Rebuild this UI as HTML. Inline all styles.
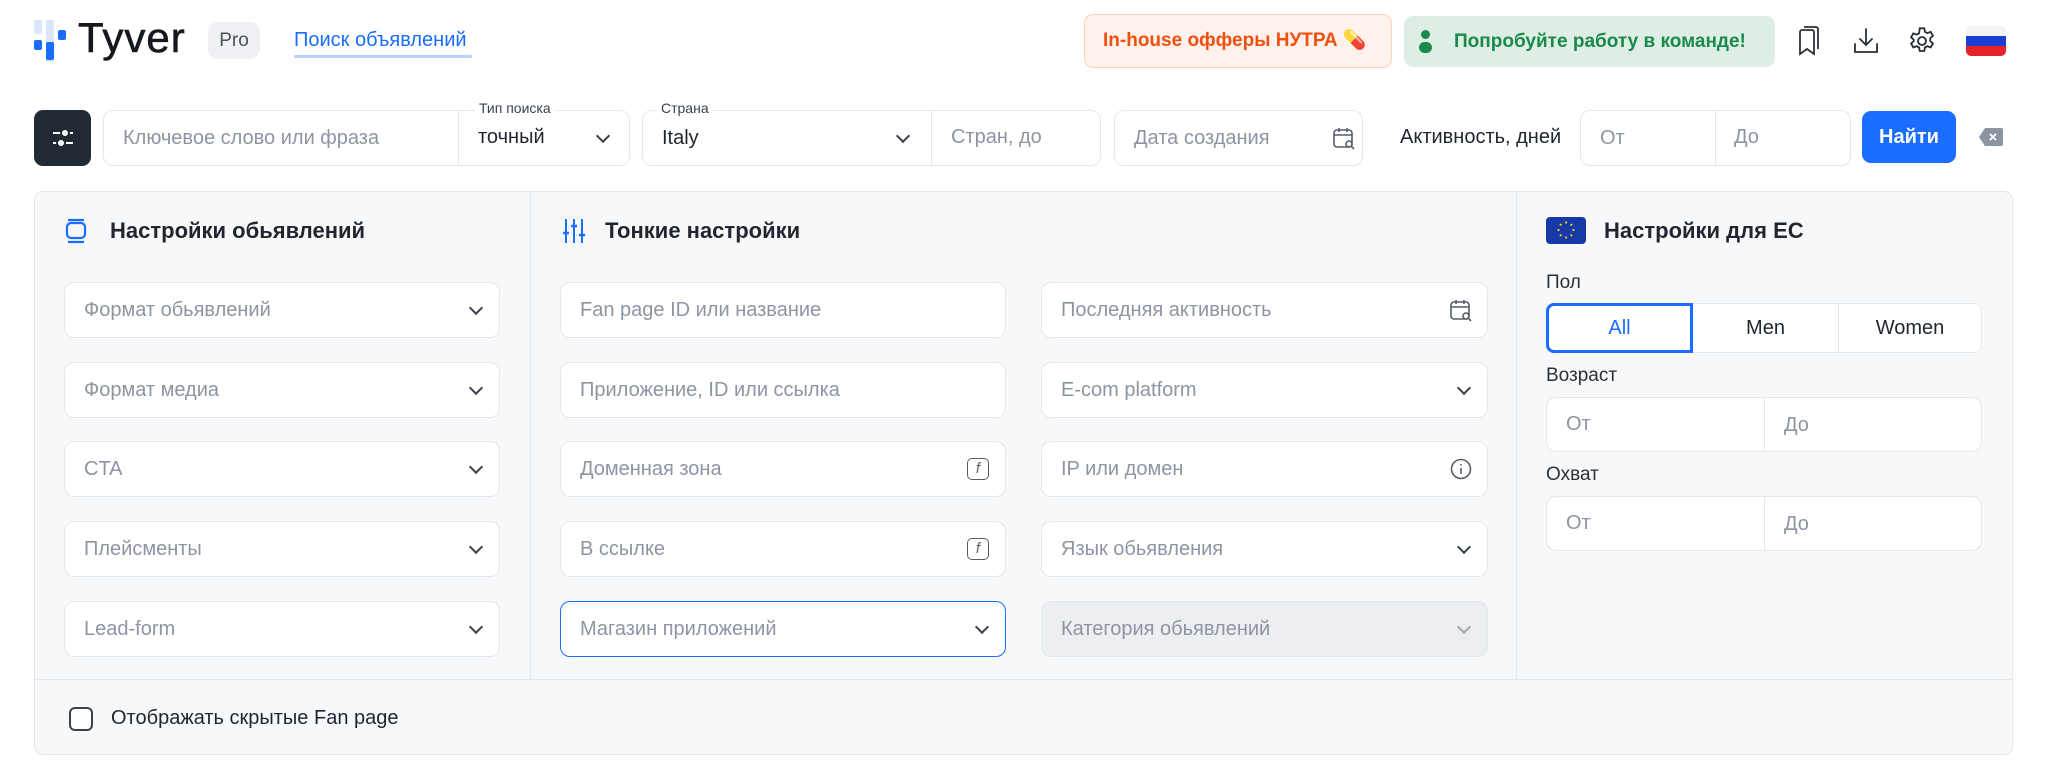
<!DOCTYPE html>
<html><head><meta charset="utf-8">
<style>
*{box-sizing:border-box;margin:0;padding:0}
body{width:2048px;height:764px;background:#fff;font-family:"Liberation Sans","Noto Sans CJK SC",sans-serif;position:relative;overflow:hidden;color:#1f2630}
.a{position:absolute}
.inp{position:absolute;background:#fff;border:1.5px solid #e4e7eb;border-radius:10px;height:56px;display:flex;align-items:center;padding-left:19px;font-size:20px;color:#8c95a2}
.inp.dis{background:#eceef1;color:#8c95a2}
.chev{position:absolute;right:18px;top:50%;width:10px;height:10px;border-right:2px solid #3a424d;border-bottom:2px solid #3a424d;transform:translateY(-70%) rotate(45deg)}
.lbl{position:absolute;font-size:14px;color:#3a424d;background:#fff;padding:0 4px}
.ttl{position:absolute;font-size:22px;font-weight:bold;color:#1f2630}
.sl{position:absolute;font-size:19px;color:#2a313a}
.fic{position:absolute;right:16px;top:50%;transform:translateY(-50%);width:22px;height:22px;border:1.6px solid #555d68;border-radius:5px;font-size:15px;font-style:italic;color:#555d68;text-align:center;line-height:19px}
</style></head><body>
<!-- header -->
<svg class="a" style="left:34px;top:20px" width="32" height="42" viewBox="0 0 32 42">
<rect x="0" y="0" width="8" height="14" rx="2" fill="#dce6fb"/><rect x="12" y="0" width="8" height="42" rx="2" fill="#dce6fb"/>
<rect x="0" y="20" width="8" height="10" rx="2" fill="#1a6dff"/><rect x="12" y="22" width="8" height="18" rx="2" fill="#1a6dff"/><rect x="24" y="10" width="8" height="10" rx="2" fill="#1a6dff"/></svg>
<div class="a" style="left:78px;top:14px;font-size:42px;color:#15191f;letter-spacing:1px;-webkit-text-stroke:0.6px #15191f">Tyver</div>
<div class="a" style="left:208px;top:22px;width:52px;height:37px;background:#eef0f4;border-radius:10px;font-size:19px;color:#4a525d;text-align:center;line-height:37px">Pro</div>
<div class="a" style="left:294px;top:29px;font-size:20px;color:#1a6dff">Поиск объявлений</div>
<div class="a" style="left:294px;top:55px;width:178px;height:3px;background:#b9cffc;border-radius:2px"></div>
<div class="a" style="left:1084px;top:14px;width:308px;height:54px;background:#fff1ec;border:1.5px solid #fccfbf;border-radius:9px;font-size:19px;font-weight:bold;color:#f0500f;line-height:51px;padding-left:18px">In-house офферы НУТРА <span style="color:#e3a81c">💊</span></div>
<div class="a" style="left:1404px;top:16px;width:371px;height:51px;background:#dfeee5;border-radius:9px;font-size:19px;font-weight:bold;color:#1a8a4c;line-height:51px;padding-left:50px">Попробуйте работу в команде!</div>
<div class="a" style="left:1421px;top:30px;width:9px;height:9px;border-radius:50%;background:#1a8a4c"></div>
<div class="a" style="left:1419px;top:42px;width:13px;height:11px;border-radius:6px;background:#1a8a4c"></div>
<svg class="a" style="left:1794px;top:26px" width="28" height="30" viewBox="0 0 28 30" fill="none" stroke="#2a313a" stroke-width="1.8"><path d="M8 4h10a2 2 0 0 1 2 2v22l-7-5-7 5V6a2 2 0 0 1 2-2z"/><path d="M10 1h12a2 2 0 0 1 2 2v20"/></svg>
<svg class="a" style="left:1852px;top:26px" width="28" height="30" viewBox="0 0 28 30" fill="none" stroke="#2a313a" stroke-width="1.8" stroke-linecap="round"><path d="M14 3v16M8 13l6 6 6-6M3 18v8h22v-8"/></svg>
<svg class="a" style="left:1906px;top:25px" width="32" height="32" viewBox="0 0 24 24" fill="none" stroke="#2a313a" stroke-width="1.4"><circle cx="12" cy="12" r="3"/><path d="M10.3 2.5h3.4l.5 2.6 1.8 1 2.5-.9 1.7 2.9-2 1.8v2.2l2 1.8-1.7 2.9-2.5-.9-1.8 1-.5 2.6h-3.4l-.5-2.6-1.8-1-2.5.9-1.7-2.9 2-1.8V11l-2-1.8 1.7-2.9 2.5.9 1.8-1z"/></svg>
<div class="a" style="left:1966px;top:26px;width:40px;height:30px;border-radius:5px;overflow:hidden"><div style="height:10px;background:#f4f4f6"></div><div style="height:10px;background:#1a3fd1"></div><div style="height:10px;background:#e3222a"></div></div>

<!-- search row -->
<div class="a" style="left:34px;top:110px;width:57px;height:56px;background:#212a35;border-radius:9px"></div>
<svg class="a" style="left:50px;top:124px" width="26" height="28" viewBox="0 0 26 28" stroke="#fff" stroke-width="2" fill="#fff"><path d="M3 9h20M3 19h20"/><circle cx="15" cy="9" r="4" stroke="#212a35" stroke-width="2"/><circle cx="11" cy="19" r="4" stroke="#212a35" stroke-width="2"/></svg>
<div class="inp" style="left:103px;top:110px;width:527px;padding-left:19px">Ключевое слово или фраза</div>
<div class="a" style="left:458px;top:111px;width:1px;height:54px;background:#e4e7eb"></div>
<div class="lbl" style="left:475px;top:100px">Тип поиска</div>
<div class="a" style="left:478px;top:126px;font-size:20px;color:#1f2630">точный</div>
<div class="chev" style="left:598px;right:auto;top:138px"></div>
<div class="inp" style="left:642px;top:110px;width:459px;padding-left:19px;color:#1f2630">Italy</div>
<div class="chev" style="left:898px;right:auto;top:138px"></div>
<div class="a" style="left:931px;top:111px;width:1px;height:54px;background:#e4e7eb"></div>
<div class="a" style="left:951px;top:126px;font-size:20px;color:#8c95a2">Стран, до</div>
<div class="lbl" style="left:657px;top:100px">Страна</div>
<div class="inp" style="left:1114px;top:110px;width:249px">Дата создания</div>
<svg class="a" style="left:1332px;top:126px" width="24" height="24" viewBox="0 0 24 24" fill="none" stroke="#555d68" stroke-width="1.6"><rect x="2" y="4" width="18" height="17" rx="3"/><path d="M7 2v4M15 2v4M2 9h18"/><circle cx="17" cy="18" r="3" fill="#fff"/><path d="M19 20l3 3"/></svg>
<div class="a" style="left:1400px;top:126px;font-size:20px;color:#1f2630">Активность, дней</div>
<div class="inp" style="left:1580px;top:110px;width:271px">От</div>
<div class="a" style="left:1715px;top:111px;width:1px;height:54px;background:#e4e7eb"></div>
<div class="a" style="left:1734px;top:126px;font-size:20px;color:#8c95a2">До</div>
<div class="a" style="left:1862px;top:111px;width:94px;height:52px;background:#1a6dff;border-radius:9px;color:#fff;font-size:20px;font-weight:bold;text-align:center;line-height:52px">Найти</div>
<svg class="a" style="left:1978px;top:127px" width="26" height="20" viewBox="0 0 26 20"><path d="M7 1h16a2 2 0 0 1 2 2v14a2 2 0 0 1-2 2H7L1 10z" fill="#8c95a2"/><path d="M12 7l6 6M18 7l-6 6" stroke="#fff" stroke-width="1.8"/></svg>

<!-- panel -->
<div class="a" style="left:34px;top:191px;width:1979px;height:564px;background:#f7f8fa;border:1.5px solid #e3e6ea;border-radius:9px"></div>
<div class="a" style="left:530px;top:192px;width:1px;height:487px;background:#e3e6ea"></div>
<div class="a" style="left:1516px;top:192px;width:1px;height:487px;background:#e3e6ea"></div>
<div class="a" style="left:35px;top:679px;width:1977px;height:1px;background:#e3e6ea"></div>

<svg class="a" style="left:65px;top:218px" width="22" height="26" viewBox="0 0 22 26" fill="none" stroke="#1a6dff" stroke-width="2.2"><rect x="2" y="5" width="18" height="15" rx="4"/><path d="M3 2h16M3 24h16"/></svg>
<div class="ttl" style="left:110px;top:218px">Настройки обьявлений</div>
<svg class="a" style="left:562px;top:218px" width="24" height="26" viewBox="0 0 24 26" stroke="#1a6dff" stroke-width="2"><path d="M4 1v24M12 1v24M20 1v24"/><path d="M1 15h6M9 8h6M17 17h6" stroke-width="2.4"/></svg>
<div class="ttl" style="left:605px;top:218px">Тонкие настройки</div>
<div class="a" style="left:1546px;top:217px;width:40px;height:27px;background:#1739a8;border-radius:4px"></div>
<svg class="a" style="left:1556px;top:220px" width="20" height="20" viewBox="0 0 20 20" fill="#f4cf1b"><g><circle cx="10" cy="2.5" r="1.1"/><circle cx="10" cy="17.5" r="1.1"/><circle cx="2.5" cy="10" r="1.1"/><circle cx="17.5" cy="10" r="1.1"/><circle cx="4.7" cy="4.7" r="1.1"/><circle cx="15.3" cy="4.7" r="1.1"/><circle cx="4.7" cy="15.3" r="1.1"/><circle cx="15.3" cy="15.3" r="1.1"/></g></svg>
<div class="ttl" style="left:1604px;top:218px">Настройки для ЕС</div>

<!-- col1 -->
<div class="inp" style="left:64px;top:282px;width:436px">Формат обьявлений<span class="chev"></span></div>
<div class="inp" style="left:64px;top:362px;width:436px">Формат медиа<span class="chev"></span></div>
<div class="inp" style="left:64px;top:441px;width:436px">CTA<span class="chev"></span></div>
<div class="inp" style="left:64px;top:521px;width:436px">Плейсменты<span class="chev"></span></div>
<div class="inp" style="left:64px;top:601px;width:436px">Lead-form<span class="chev"></span></div>
<!-- col2 -->
<div class="inp" style="left:560px;top:282px;width:446px">Fan page ID или название</div>
<div class="inp" style="left:560px;top:362px;width:446px">Приложение, ID или ссылка</div>
<div class="inp" style="left:560px;top:441px;width:446px">Доменная зона<span class="fic">f</span></div>
<div class="inp" style="left:560px;top:521px;width:446px">В ссылке<span class="fic">f</span></div>
<div class="inp" style="left:560px;top:601px;width:446px;border-color:#1a6dff">Магазин приложений<span class="chev"></span></div>
<div class="inp" style="left:1041px;top:282px;width:447px">Последняя активность
<svg style="position:absolute;right:14px;top:15px" width="24" height="24" viewBox="0 0 24 24" fill="none" stroke="#555d68" stroke-width="1.6"><rect x="2" y="4" width="18" height="17" rx="3"/><path d="M7 2v4M15 2v4M2 9h18"/><circle cx="17" cy="18" r="3" fill="#fff"/><path d="M19 20l3 3"/></svg></div>
<div class="inp" style="left:1041px;top:362px;width:447px">E-com platform<span class="chev"></span></div>
<div class="inp" style="left:1041px;top:441px;width:447px">IP или домен
<svg style="position:absolute;right:15px;top:16px" width="22" height="22" viewBox="0 0 22 22" fill="none" stroke="#555d68" stroke-width="1.6"><circle cx="11" cy="11" r="9.5"/><path d="M11 10v6M11 6v1.5"/></svg></div>
<div class="inp" style="left:1041px;top:521px;width:447px">Язык обьявления<span class="chev"></span></div>
<div class="inp dis" style="left:1041px;top:601px;width:447px">Категория обьявлений<span class="chev" style="border-color:#a0a7b1"></span></div>
<!-- col3 -->
<div class="sl" style="left:1546px;top:272px">Пол</div>
<div class="a" style="left:1546px;top:303px;width:436px;height:50px;background:#fff;border:1.5px solid #e4e7eb;border-radius:8px"></div>
<div class="a" style="left:1838px;top:304px;width:1px;height:48px;background:#e4e7eb"></div>
<div class="a" style="left:1546px;top:303px;width:147px;height:50px;border:3px solid #1a6dff;border-radius:8px 0 0 8px;text-align:center;line-height:44px;font-size:20px;color:#1a6dff">All</div>
<div class="a" style="left:1693px;top:303px;width:145px;height:50px;text-align:center;line-height:50px;font-size:20px;color:#1f2630">Men</div>
<div class="a" style="left:1838px;top:303px;width:144px;height:50px;text-align:center;line-height:50px;font-size:20px;color:#1f2630">Women</div>
<div class="sl" style="left:1546px;top:365px">Возраст</div>
<div class="inp" style="left:1546px;top:397px;width:436px;height:55px">От</div>
<div class="a" style="left:1764px;top:398px;width:1px;height:53px;background:#e4e7eb"></div>
<div class="a" style="left:1784px;top:414px;font-size:20px;color:#8c95a2">До</div>
<div class="sl" style="left:1546px;top:464px">Охват</div>
<div class="inp" style="left:1546px;top:496px;width:436px;height:55px">От</div>
<div class="a" style="left:1764px;top:497px;width:1px;height:53px;background:#e4e7eb"></div>
<div class="a" style="left:1784px;top:513px;font-size:20px;color:#8c95a2">До</div>
<!-- bottom -->
<div class="a" style="left:69px;top:707px;width:24px;height:24px;border:2px solid #3a424d;border-radius:6px;background:#fff"></div>
<div class="a" style="left:111px;top:707px;font-size:20px;color:#1f2630">Отображать скрытые Fan page</div>
</body></html>
